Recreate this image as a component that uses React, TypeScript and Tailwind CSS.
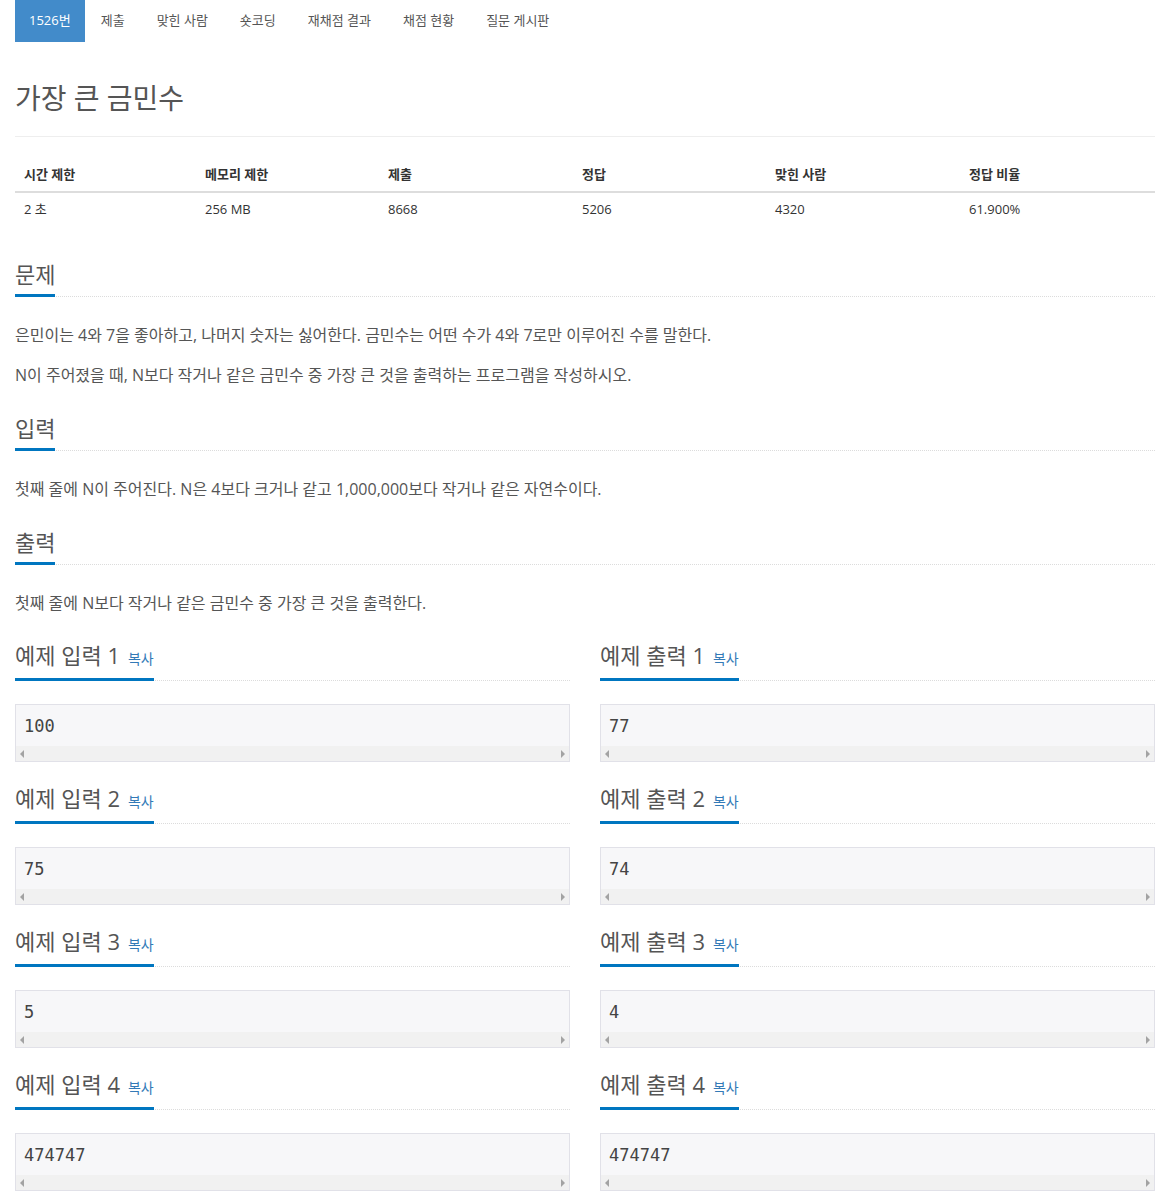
const sans = "font-['Open_Sans','Noto_Sans_CJK_KR',sans-serif]";

const tabs = ["1526번", "제출", "맞힌 사람", "숏코딩", "재채점 결과", "채점 현황", "질문 게시판"];

const stats = [
    { label: "시간 제한", value: "2 초", w: "w-[181px]" },
    { label: "메모리 제한", value: "256 MB", w: "w-[183px]" },
    { label: "제출", value: "8668", w: "w-[194px]" },
    { label: "정답", value: "5206", w: "w-[193px]" },
    { label: "맞힌 사람", value: "4320", w: "w-[194px]" },
    { label: "정답 비율", value: "61.900%", w: "w-[195px]" },
];

const samples = [
    ["100", "77"],
    ["75", "74"],
    ["5", "4"],
    ["474747", "474747"],
];

function SectionTitle({ children }: { children: React.ReactNode }) {
    return <div className="border-b border-dotted border-[#dcdcdc] leading-[30px]">
        <span className="inline-block border-b-[3px] border-[#0076c0] pb-[5px] -mb-px text-[22px] text-[#555]">
            {children}
        </span>
    </div>
}

function SampleBox({ title, data }: { title: string, data: string }) {
    return <div>
        <div className="border-b border-dotted border-[#dcdcdc] leading-[30px]">
            <span className="inline-block border-b-[3px] border-[#0076c0] pb-[4px] -mb-px">
                <span className="text-[22px] text-[#555]">{title}</span>
                <span className="ml-[8px] text-[14px] text-[#337ab7]">복사</span>
            </span>
        </div>
        <div className="mt-[23px] h-[58px] border border-[#e1e1e8] bg-[#f7f7f9] flex flex-col">
            <div className="pt-[9px] px-[8px] leading-[24px] text-[17px] text-[#444] font-['DejaVu_Sans_Mono',monospace]">{data}</div>
            <div className="mt-auto h-[15px] bg-[#f1f1f1] flex items-center justify-between px-[4px]">
                <span className="w-0 h-0 border-y-[4px] border-y-transparent border-r-[4px] border-r-[#a3a3a3]" />
                <span className="w-0 h-0 border-y-[4px] border-y-transparent border-l-[4px] border-l-[#a3a3a3]" />
            </div>
        </div>
    </div>
}

export default function App() {
    return <div className={`${sans} bg-white min-h-[1202px] px-[15px] text-[#555]`}>
        <nav className="flex h-[42px] text-[13px]">
            {tabs.map((t, i) => <div key={i}
                className={`flex items-center ${i === 0 ? "px-[14px] bg-[#428bca] text-white" : "px-[16px] text-[#555]"}`}>
                {t}
            </div>)}
        </nav>

        <h1 className="mt-[36px] pb-[18px] border-b border-[#eee] text-[28px] leading-[40px] text-[#555]">가장 큰 금민수</h1>

        <table className="mt-[19px] w-full text-[13px] border-collapse">
            <thead>
                <tr className="border-b-2 border-[#ddd]">
                    {stats.map((s, i) => <th key={i} className={`${s.w} text-left font-bold text-[#333] px-[9px] pt-[8px] pb-[7px] leading-[20px]`}>{s.label}</th>)}
                </tr>
            </thead>
            <tbody>
                <tr>
                    {stats.map((s, i) => <td key={i} className="px-[9px] py-[6px] leading-[20px] text-[#333]">{s.value}</td>)}
                </tr>
            </tbody>
        </table>

        <section className="mt-[34px]">
            <SectionTitle>문제</SectionTitle>
            <div className="text-[16px] leading-[24px] text-[#555]">
                <p className="mt-[26px]">은민이는 4와 7을 좋아하고, 나머지 숫자는 싫어한다. 금민수는 어떤 수가 4와 7로만 이루어진 수를 말한다.</p>
                <p className="mt-[16px]">N이 주어졌을 때, N보다 작거나 같은 금민수 중 가장 큰 것을 출력하는 프로그램을 작성하시오.</p>
            </div>
        </section>

        <section className="mt-[26px]">
            <SectionTitle>입력</SectionTitle>
            <p className="mt-[26px] text-[16px] leading-[24px]">첫째 줄에 N이 주어진다. N은 4보다 크거나 같고 1,000,000보다 작거나 같은 자연수이다.</p>
        </section>

        <section className="mt-[26px]">
            <SectionTitle>출력</SectionTitle>
            <p className="mt-[26px] text-[16px] leading-[24px]">첫째 줄에 N보다 작거나 같은 금민수 중 가장 큰 것을 출력한다.</p>
        </section>

        <div className="mt-[25px] grid grid-cols-2 gap-x-[30px] gap-y-[21px]">
            {samples.map(([input, output], i) => [
                <SampleBox key={`in${i}`} title={`예제 입력 ${i + 1}`} data={input} />,
                <SampleBox key={`out${i}`} title={`예제 출력 ${i + 1}`} data={output} />,
            ])}
        </div>
    </div>
}
